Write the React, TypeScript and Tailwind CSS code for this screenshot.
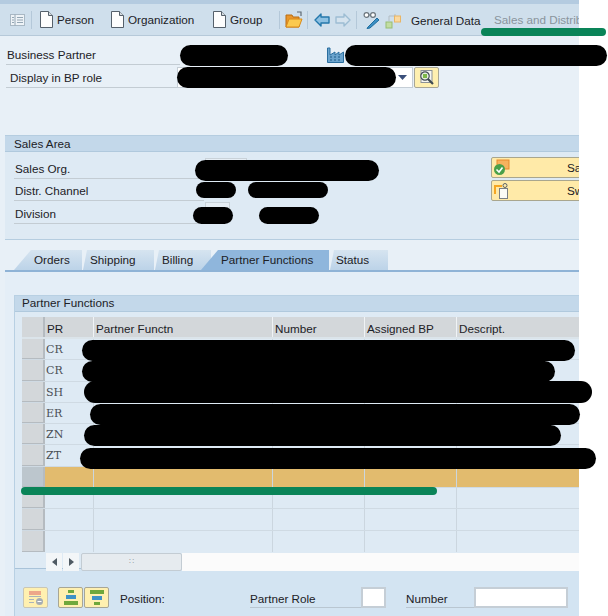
import React from "react";

const Doc = () => (
  <svg width="13" height="17" viewBox="0 0 13 17" className="shrink-0">
    <path d="M.5.5H8.5L12.5 4.5V16.5H.5Z" fill="#fdfdfd" stroke="#55606b" />
    <path d="M8.5.5V4.5H12.5" fill="#d5dbe0" stroke="#55606b" />
  </svg>
);

const Sep = () => <div className="w-px h-[18px] bg-[#b4c8d9] shrink-0" />;

const ToolText = ({ children, muted }: { children: React.ReactNode; muted?: boolean }) => (
  <span className={`text-[11.7px] leading-none whitespace-nowrap ${muted ? "text-[#8a949c]" : "text-[#1c2126]"}`}>{children}</span>
);

const Arrow = ({ flip, muted }: { flip?: boolean; muted?: boolean }) => (
  <svg width="16" height="14" viewBox="0 0 16 14" className={flip ? "-scale-x-100" : ""}>
    <path d="M1 7L7 1V4H15V10H7V13Z" fill={muted ? "#d5e3ee" : "#8cc0e2"} stroke={muted ? "#9dbdd3" : "#2377ab"} strokeWidth="1.4" strokeLinejoin="round" />
  </svg>
);

const Field = ({ label, width = "w-[179px]", height = "h-[22px]", indent }: { label: string; width?: string; height?: string; indent?: boolean }) => (
  <div className={`${width} ${height} border-b border-[#c3ccd3] flex items-end pb-[2px] ${indent ? "pl-[4px]" : "pl-[1px]"}`}>
    <span className="text-[11.7px] leading-[15px] text-[#1c2126] whitespace-nowrap">{label}</span>
  </div>
);

const YellowBtn = ({ children, className = "" }: { children: React.ReactNode; className?: string }) => (
  <div className={`w-[25px] h-[21px] bg-[#fff0b0] border border-[#a8a695] rounded-[2px] flex items-center justify-center shrink-0 ${className}`}>{children}</div>
);

const rows = [
  { pr: "CR" }, { pr: "CR" }, { pr: "SH" }, { pr: "ER" }, { pr: "ZN" }, { pr: "ZT" },
  { pr: "", sel: true }, { pr: "" }, { pr: "" }, { pr: "" },
];

const Row = ({ pr, sel, last }: { pr: string; sel?: boolean; last?: boolean }) => (
  <div className={`flex h-[21.3px] ${last ? "" : "border-b"} border-[#cfdae3] ${sel ? "bg-[#e2bb6e]" : "bg-[#deeaf4]"}`}>
    <div className={`w-[23px] shrink-0 border-r-2 border-b border-[#b5bbc0] ${sel ? "bg-[#bcc6cd]" : "bg-[#d3d7da]"}`} />
    <div className="w-[49px] shrink-0 border-r border-[#cbd6df] pl-px font-['DejaVu_Serif',serif] text-[11px] leading-[21px] text-[#4a4f54]">{pr}</div>
    <div className="w-[179px] shrink-0 border-r border-[#cbd6df]" />
    <div className="w-[92px] shrink-0 border-r border-[#cbd6df]" />
    <div className="w-[92px] shrink-0 border-r border-[#cbd6df]" />
    <div className="flex-1" />
  </div>
);

const Tab = ({ label, className }: { label: string; className: string }) => (
  <div className={`h-[20px] flex items-center text-[11.7px] leading-none text-[#1c2126] whitespace-nowrap shrink-0 ${className}`}>{label}</div>
);

export default function App() {
  return (
    <div className="relative w-[608px] h-[616px] overflow-hidden bg-white font-['Liberation_Sans',sans-serif]">
      <div className="w-[579px] h-[616px] overflow-hidden flex flex-col bg-[#e8f0f7]">
        {/* top strip */}
        <div className="h-[4px] bg-[#b4cbe0] shrink-0" />
        {/* toolbar */}
        <div className="h-[32px] shrink-0 flex items-center bg-[#cfdfec] border-b border-[#b6c9d9] pl-[10px]">
          <svg width="15" height="12" viewBox="0 0 15 12" className="shrink-0">
            <rect x=".5" y=".5" width="14" height="11" fill="#eef3f7" stroke="#a9b8c4" />
            <path d="M5 .5V11.5M7 3.5H13M7 6H13M7 8.5H13M2 3.5H4M2 6H4M2 8.5H4" stroke="#94a6b4" />
          </svg>
          <div className="ml-[6px] shrink-0"><Sep /></div>
          <div className="ml-[8px] flex items-center gap-[4px] w-[71px] shrink-0"><Doc /><ToolText>Person</ToolText></div>
          <div className="flex items-center gap-[4px] w-[102px] shrink-0"><Doc /><ToolText>Organization</ToolText></div>
          <div className="flex items-center gap-[4px] w-[66px] shrink-0"><Doc /><ToolText>Group</ToolText></div>
          <Sep />
          <svg width="18" height="18" viewBox="0 0 18 18" className="ml-[5px] shrink-0">
            <path d="M1 4H7L8 6H14V16H1Z" fill="#e9962c" stroke="#b96d12" />
            <path d="M1 16L4 8H17L14 16Z" fill="#fbc94f" stroke="#d98a1a" />
            <path d="M12 1H16V5" fill="none" stroke="#5f6b74" strokeWidth="1.2" />
          </svg>
          <div className="ml-[4px] shrink-0"><Sep /></div>
          <div className="ml-[6px] shrink-0"><Arrow /></div>
          <div className="ml-[5px] shrink-0"><Arrow flip muted /></div>
          <div className="ml-[5px] shrink-0"><Sep /></div>
          <svg width="17" height="18" viewBox="0 0 17 18" className="ml-[6px] shrink-0">
            <circle cx="3.5" cy="4" r="2.4" fill="#fff" stroke="#6a747c" strokeWidth="1.2" />
            <circle cx="10" cy="4" r="2.4" fill="#fff" stroke="#6a747c" strokeWidth="1.2" />
            <path d="M6 4H7.5" stroke="#6a747c" />
            <path d="M5 16L14 7L16 9L7 17L4 17.5Z" fill="#3b8fc4" stroke="#1f6e9f" />
          </svg>
          <svg width="16" height="18" viewBox="0 0 16 18" className="ml-[5px] shrink-0">
            <path d="M4 10V5H10V3" fill="none" stroke="#b3bdc4" />
            <rect x="9.5" y="5" width="6" height="6" fill="#fbd9a0" stroke="#e9b565" />
            <rect x="1" y="11" width="6" height="6" fill="#c2dda2" stroke="#97bd72" />
          </svg>
          <div className="ml-[10px] w-[83px] shrink-0"><ToolText>General Data</ToolText></div>
          <ToolText muted>Sales and Distribution</ToolText>
        </div>

        {/* header fields */}
        <div className="h-[99px] shrink-0 pt-[8px] pl-[6px] flex flex-col">
          <div className="flex items-start">
            <Field label="Business Partner" width="w-[174px]" height="h-[21px]" />
            <svg width="17" height="16" viewBox="0 0 17 16" className="ml-[147px] mt-[3px] shrink-0">
              <path d="M.5 15.5V1H3V8L8 5V8L12 5V8L16.5 5V15.5Z" fill="#6aa3cd" stroke="#2a6e9f" />
              <path d="M3 10H5M7 10H9M11 10H13M3 13H5M7 13H9M11 13H13" stroke="#1c5a87" />
            </svg>
          </div>
          <div className="flex items-start">
            <Field label="Display in BP role" width="w-[174px]" height="h-[23px]" indent />
            <div className="ml-[-3px] mt-[2px] w-[236px] h-[21px] bg-white border border-[#c5ced6] flex items-center justify-end pr-[5px] shrink-0">
              <svg width="9" height="5" viewBox="0 0 9 5"><path d="M0 0H9L4.5 5Z" fill="#3a4f7a" /></svg>
            </div>
            <YellowBtn className="mt-[2px] ml-px">
              <svg width="17" height="17" viewBox="0 0 17 17">
                <rect x="3" y="1.5" width="11" height="12" fill="#f7f7f2" stroke="#8b9197" />
                <circle cx="7" cy="7" r="4.2" fill="#fff" stroke="#3f4a50" strokeWidth="1.2" />
                <rect x="4.8" y="4.8" width="4.4" height="4.4" fill="#7cb648" />
                <path d="M10 10L15 15" stroke="#3f4a50" strokeWidth="2.2" />
              </svg>
            </YellowBtn>
          </div>
        </div>

        {/* sales area */}
        <div className="h-[105px] shrink-0 ml-[5px] flex flex-col border-y border-[#b5cde0] bg-[#deeaf4]">
          <div className="h-[16px] shrink-0 bg-[#c3d8ea] border-b border-[#b0c9dd] pl-[9px] text-[11.7px] leading-[15px] text-[#1c2126]">Sales Area</div>
          <div className="flex flex-1 pl-[9px]">
            <div className="flex flex-col w-[477px] pt-[5px] shrink-0">
              <div className="relative w-[240px]">
                <Field label="Sales Org." width="w-[190px]" />
                <div className="absolute left-[191px] top-[1px] w-[42px] h-[21px] border border-[#c9d2d9] bg-[#e6eef5]" />
              </div>
              <Field label="Distr. Channel" width="w-[190px]" />
              <div className="relative w-[240px]">
                <Field label="Division" width="w-[190px]" height="h-[23px]" />
                <div className="absolute left-[191px] top-[1px] w-[25px] h-[21px] border border-[#c9d2d9] bg-[#e6eef5]" />
              </div>
            </div>
            <div className="flex flex-col gap-[2px] pt-[5px] shrink-0">
              <div className="w-[140px] h-[21px] bg-[#ffeaa8] border border-[#a9a68e] rounded-[2px] flex items-center pl-[1px]">
                <svg width="17" height="17" viewBox="0 0 17 17" className="shrink-0">
                  <rect x="4" y="1" width="12" height="9" fill="#f6b25e" stroke="#e58a2c" />
                  <circle cx="6.5" cy="10.5" r="5.5" fill="#4aa04a" />
                  <path d="M3.5 10.5L6 13L9.5 8.5" stroke="#fff" strokeWidth="1.6" fill="none" />
                </svg>
                <span className="ml-[57px] text-[11.7px] text-[#1c2126] whitespace-nowrap">Sales Areas</span>
              </div>
              <div className="w-[140px] h-[21px] bg-[#ffeaa8] border border-[#a9a68e] rounded-[2px] flex items-center pl-[1px]">
                <svg width="17" height="18" viewBox="0 0 17 18" className="shrink-0">
                  <path d="M1 3H9V5H3V12H1Z" fill="#f5a623" />
                  <rect x="6.5" y="6.5" width="8" height="10" fill="#fbfbf6" stroke="#7a7f84" />
                  <circle cx="12" cy="3.5" r="2" fill="none" stroke="#5c6368" />
                </svg>
                <span className="ml-[57px] text-[11.7px] text-[#1c2126] whitespace-nowrap">Switch Area</span>
              </div>
            </div>
          </div>
        </div>

        {/* tabs */}
        <div className="h-[10px] shrink-0" />
        <div className="h-[20px] shrink-0 flex pl-[14px] items-end relative">
          <Tab label="Orders" className="w-[68px] pl-[20px] bg-gradient-to-b from-[#d6e4f0] to-[#bcd3e8] [clip-path:polygon(0_100%,17px_0,100%_0,100%_100%)]" />
          <Tab label="Shipping" className="w-[71px] ml-px pl-[7px] bg-gradient-to-b from-[#d6e4f0] to-[#bcd3e8] [clip-path:polygon(0_100%,4px_0,100%_0,100%_100%)]" />
          <Tab label="Billing" className="w-[56px] ml-px pl-[7px] bg-gradient-to-b from-[#d6e4f0] to-[#bcd3e8] [clip-path:polygon(0_100%,4px_0,100%_0,100%_100%)]" />
          <Tab label="Partner Functions" className="w-[128px] -ml-[10px] pl-[20px] bg-[#8fb6dc] [clip-path:polygon(0_100%,17px_0,100%_0,100%_100%)]" />
          <Tab label="Status" className="w-[58px] ml-px pl-[6px] bg-gradient-to-b from-[#d6e4f0] to-[#bcd3e8] [clip-path:polygon(0_100%,4px_0,100%_0,100%_100%)]" />
        </div>
        <div className="h-[2px] shrink-0 bg-[#8fb3d6] ml-[5px]" />

        {/* tab body */}
        <div className="flex-1 min-h-0 ml-[5px] bg-[#e4eef7] pl-[9px] flex flex-col">
          <div className="h-[23px] shrink-0" />
          <div className="flex-1 min-h-0 border-l border-t border-[#b8d0e3] bg-[#d3e4f2] flex flex-col">
            <div className="h-[16px] shrink-0 bg-[#c3d8ea] border-b border-[#b0c9dd] pl-[7px] text-[11.7px] leading-[13px] text-[#1c2126]">Partner Functions</div>
            <div className="h-[257px] shrink-0 bg-[#deeaf4] pl-[7px] pt-[5px] border-b border-[#a9c3d9]">
              <div className="flex h-[22px] bg-[#d3d7da] border-b-2 border-[#dbe4ea] text-[11.7px] leading-[23px] text-[#1c2126]">
                <div className="w-[23px] shrink-0 border-r-2 border-[#b5bbc0]" />
                <div className="w-[49px] shrink-0 border-r border-[#f0f3f5] pl-[2px]">PR</div>
                <div className="w-[179px] shrink-0 border-r border-[#f0f3f5] pl-[2px]">Partner Functn</div>
                <div className="w-[92px] shrink-0 border-r border-[#f0f3f5] pl-[2px]">Number</div>
                <div className="w-[92px] shrink-0 border-r border-[#f0f3f5] pl-[2px]">Assigned BP</div>
                <div className="flex-1 pl-[2px]">Descript.</div>
              </div>
              {rows.map((r, i) => (
                <Row key={i} pr={r.pr} sel={r.sel} last={i === rows.length - 1} />
              ))}
              <div className="flex h-[18px] mt-px items-center">
                <div className="w-[24px] h-full shrink-0" />
                <div className="w-[16px] h-full bg-[#f3f6f8] flex items-center justify-center">
                  <svg width="5" height="8" viewBox="0 0 5 8"><path d="M5 0V8L0 4Z" fill="#4f5a63" /></svg>
                </div>
                <div className="w-[16px] h-full ml-px bg-[#f3f6f8] flex items-center justify-center">
                  <svg width="5" height="8" viewBox="0 0 5 8"><path d="M0 0V8L5 4Z" fill="#4f5a63" /></svg>
                </div>
                <div className="w-[101px] h-full ml-[2px] bg-[#e6ebef] border border-[#c3ccd3] rounded-[2px] flex items-center justify-center text-[8px] leading-none text-[#9aa4ac]">∷</div>
                <div className="flex-1 h-full bg-[#fbfbfb]" />
              </div>
            </div>
            <div className="flex items-start pl-[8px] pt-[18px]">
              <YellowBtn className="bg-[#f6ecd0] border-[#c9c6b5]">
                <svg width="16" height="16" viewBox="0 0 16 16">
                  <rect x="1" y="1" width="12" height="4" fill="#eda78a" />
                  <path d="M1 6.5H13M1 9.5H6M1 12.5H6" stroke="#a9b3ba" />
                  <circle cx="11.5" cy="11.5" r="3.5" fill="#a6adb3" />
                  <path d="M9.5 11.5H13.5" stroke="#fff" />
                </svg>
              </YellowBtn>
              <YellowBtn className="ml-[10px]">
                <svg width="16" height="15" viewBox="0 0 16 15">
                  <rect x="5" y="0" width="6" height="3" fill="#6fa83c" />
                  <rect x="3" y="5" width="10" height="4" fill="#3f92c7" />
                  <rect x="1" y="11" width="14" height="4" fill="#6fa83c" />
                </svg>
              </YellowBtn>
              <YellowBtn className="ml-px">
                <svg width="16" height="15" viewBox="0 0 16 15">
                  <rect x="1" y="0" width="14" height="4" fill="#6fa83c" />
                  <rect x="3" y="6" width="10" height="4" fill="#3f92c7" />
                  <rect x="5" y="12" width="6" height="3" fill="#6fa83c" />
                </svg>
              </YellowBtn>
              <span className="ml-[11px] w-[130px] shrink-0 text-[11.7px] leading-[23px] text-[#1c2126]">Position:</span>
              <div className="w-[111px] h-[21px] shrink-0 border-b border-[#b9c6d1] text-[11.7px] leading-[24px] text-[#1c2126]">Partner Role</div>
              <div className="w-[25px] h-[21px] bg-white border-2 border-[#c5ced6] shrink-0" />
              <div className="ml-[20px] w-[68px] h-[21px] shrink-0 border-b border-[#b9c6d1] text-[11.7px] leading-[24px] text-[#1c2126]">Number</div>
              <div className="w-[94px] h-[21px] bg-white border-2 border-[#c5ced6] shrink-0" />
            </div>
          </div>
        </div>
      </div>

      {/* redaction marks over the page */}
      <div className="absolute left-[180px] top-[45px] w-[108px] h-[21px] rounded-full bg-black" />
      <div className="absolute left-[345px] top-[45px] w-[262px] h-[21px] rounded-full bg-black" />
      <div className="absolute left-[177px] top-[67px] w-[219px] h-[21px] rounded-full bg-black" />
      <div className="absolute left-[195px] top-[160px] w-[184px] h-[21px] rounded-full bg-black" />
      <div className="absolute left-[196px] top-[182px] w-[40px] h-[16px] rounded-full bg-black" />
      <div className="absolute left-[248px] top-[182px] w-[80px] h-[16px] rounded-full bg-black" />
      <div className="absolute left-[193px] top-[207px] w-[40px] h-[17px] rounded-full bg-black" />
      <div className="absolute left-[259px] top-[207px] w-[60px] h-[17px] rounded-full bg-black" />
      <div className="absolute left-[82px] top-[340px] w-[493px] h-[21px] rounded-full bg-black" />
      <div className="absolute left-[82px] top-[361px] w-[473px] h-[21px] rounded-full bg-black" />
      <div className="absolute left-[84px] top-[381px] w-[508px] h-[22px] rounded-full bg-black" />
      <div className="absolute left-[90px] top-[404px] w-[490px] h-[21px] rounded-full bg-black" />
      <div className="absolute left-[84px] top-[425px] w-[477px] h-[21px] rounded-full bg-black" />
      <div className="absolute left-[80px] top-[448px] w-[516px] h-[21px] rounded-full bg-black" />
      <div className="absolute left-[481px] top-[28px] w-[125px] h-[8px] rounded-full bg-[#0a8458]" />
      <div className="absolute left-[21px] top-[487px] w-[416px] h-[8px] rounded-full bg-[#0a8458]" />
    </div>
  );
}
